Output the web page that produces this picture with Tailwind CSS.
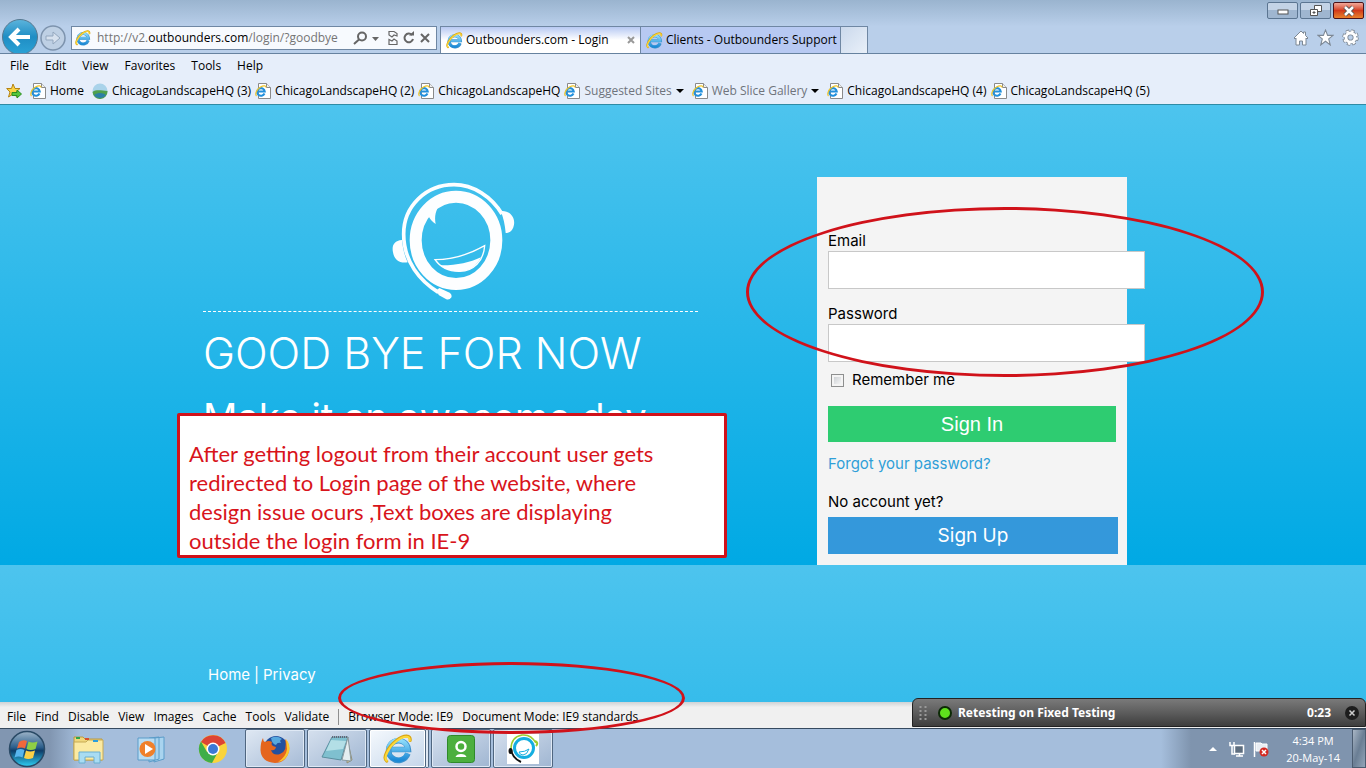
<!DOCTYPE html>
<html lang="en">
<head>
<meta charset="utf-8">
<title>Outbounders.com - Login</title>
<script src="https://cdn.jsdelivr.net/npm/@tailwindcss/browser@4"></script>
</head>
<body class="flex min-h-screen flex-col overflow-x-hidden font-['Open_Sans',sans-serif] text-xs text-black">

<svg class="absolute size-0" aria-hidden="true">
  <defs>
    <linearGradient id="eblue" x1="0" y1="0" x2="0" y2="1"><stop offset="0" stop-color="#8fdcfa"/><stop offset="1" stop-color="#1c8ad6"/></linearGradient>
    <linearGradient id="orb" x1="0" y1="0" x2="0" y2="1"><stop offset="0" stop-color="#9db4c8"/><stop offset=".45" stop-color="#2c5f8c"/><stop offset=".55" stop-color="#0d3c68"/><stop offset="1" stop-color="#2fd0f5"/></linearGradient>
    <linearGradient id="back" x1="0" y1="0" x2="0" y2="1"><stop offset="0" stop-color="#5cb4dc"/><stop offset=".5" stop-color="#1f8dc4"/><stop offset="1" stop-color="#2ba3d6"/></linearGradient>
  </defs>
  <symbol id="ie" viewBox="0 0 32 32">
    <path d="M26.500 21A10.500 10.500 0 1 1 27 16.500H9" fill="none" stroke="#3f93cc" stroke-width="6"/>
    <path d="M26 20.500A10.500 10.500 0 1 1 26.500 16.500H9" fill="none" stroke="url(#eblue)" stroke-width="4.600"/>
    <path d="M4 29C-1 26 5 14 14 7S30 1 29 7" fill="none" stroke="#d9a514" stroke-width="3.200" stroke-linecap="round"/>
    <path d="M4 28.500C0 26 6 14 14.500 7.500S29 2 28.500 7" fill="none" stroke="#fbd83a" stroke-width="2.200" stroke-linecap="round"/>
  </symbol>
  <symbol id="iepage" viewBox="0 0 16 16">
    <path d="M3.500.5h8l4 4v11h-12z" fill="#fff" stroke="#8a8a8a"/><path d="M11.500.5v4h4" fill="#eee" stroke="#8a8a8a"/>
    <path d="M9.500 10.500A3.800 3.800 0 1 1 9.800 8.500H3.500" fill="none" stroke="#2390dc" stroke-width="2"/>
    <path d="M1.500 13C-.5 11 2 6 5.500 4S11 3 11 4.500" fill="none" stroke="#f0c528" stroke-width="1.200"/>
  </symbol>
</svg>

<header>
  <div class="flex h-[54px] border-b border-[#66829f] bg-linear-to-b from-[#9ab4cf] to-[#b9cfea] to-50%">
    <div class="flex w-[66px] shrink-0 items-end gap-0.5 pl-0.5">
      <button aria-label="Back"><svg class="block h-[34px] w-9" viewBox="0 0 36 34"><circle cx="18" cy="18" r="17.500" fill="url(#back)" stroke="#58788f"/><path d="M9 18h19M17 10l-8 8 8 8" fill="none" stroke="#fff" stroke-width="4"/></svg></button>
      <button aria-label="Forward" class="mb-0.5"><svg class="block size-[26px]" viewBox="0 0 26 26"><circle cx="13" cy="13" r="12" fill="#bed0e4" stroke="#7d93ad" stroke-width="1.500"/><path d="M6 11h7V7l7 6-7 6v-4H6z" fill="#d6e1ee" stroke="#93a7be"/></svg></button>
    </div>
    <div class="ml-[5px] mt-[26px] flex h-6 w-[366px] items-center border border-[#6f87a3] bg-[#f7fafe] pl-[3px]">
      <svg class="size-4 shrink-0"><use href="#ie"/></svg>
      <div class="ml-1.5 flex-1 text-xs text-[#757575]">http://v2.<span class="text-black">outbounders.com</span>/login/?goodbye</div>
      <svg class="h-4 w-[84px] shrink-0" viewBox="0 0 84 16" fill="none" stroke="#666" stroke-width="2"><circle cx="10" cy="6.500" r="4"/><path d="M7 9.500 2 14"/><path d="M20 7h7l-3.500 4z" fill="#666" stroke="none"/><path d="M37 5V1.500h5l3 2V6l-3-1-2 2zM37 14.500v-5l3 1.500 2-2 3 2v3.500z" stroke-width="1.200"/><path d="M60 5a4.300 4.300 0 1 0 1 4"/><path d="M57 5.500h5V1z" fill="#666" stroke="none"/><path d="m69 4 8 8m0-8-8 8"/></svg>
    </div>
    <nav class="ml-[3px] mt-[26px] flex border border-b-0 border-[#6f87a3]">
      <div class="flex w-[200px] items-center border-r border-[#6f87a3] bg-linear-to-b from-[#b7c9f2] to-white to-50% pl-[5px] pr-[5px]">
        <svg class="size-[17px]"><use href="#ie"/></svg><a href="#" class="ml-[3px] flex-1">Outbounders.com - Login</a>
        <button aria-label="Close tab"><svg class="block size-2" viewBox="0 0 8 8"><path d="m1 1 6 6m0-6-6 6" stroke="#999" stroke-width="2"/></svg></button>
      </div>
      <div class="flex w-[200px] items-center border-r border-[#6f87a3] bg-[#b7c9f2] pl-[5px]">
        <svg class="size-[17px]"><use href="#ie"/></svg><a href="#" class="ml-[3px] whitespace-nowrap">Clients - Outbounders Support</a>
      </div>
      <button aria-label="New tab" class="w-[26px] bg-linear-to-br from-[#cbd9ec] to-[#e9f0f9]"></button>
    </nav>
    <div class="ml-auto flex flex-col items-end pr-0.5 pt-0.5">
      <div class="flex gap-0.5">
        <button aria-label="Minimize" class="flex h-[17px] w-[31px] items-center justify-center rounded-xs border border-[#5b7591] bg-linear-to-b from-[#c3d3e6] from-50% to-[#9fb6d0] to-50%"><svg class="h-2 w-3" viewBox="0 0 12 8"><rect x="1" y="3" width="10" height="4" fill="#fff" stroke="#555"/></svg></button>
        <button aria-label="Restore" class="flex h-[17px] w-[31px] items-center justify-center rounded-xs border border-[#5b7591] bg-linear-to-b from-[#c3d3e6] from-50% to-[#9fb6d0] to-50%"><svg class="h-3 w-3.5" viewBox="0 0 14 12" fill="#fff" stroke="#555"><path d="M5.500.5h7v6h-7z"/><path d="M1.500 4.500h7v6h-7z"/><path d="M4 7h2v1H4z" fill="#555"/></svg></button>
        <button aria-label="Close" class="flex h-[17px] w-[31px] items-center justify-center rounded-xs border border-[#4d1218] bg-linear-to-b from-[#f0a89a] via-[#d2391b] via-50% to-[#e8802c]"><svg class="h-3 w-3.5" viewBox="0 0 14 12"><path d="m3 2 8 8m0-8-8 8" stroke="#555" stroke-width="4.500"/><path d="m3 2 8 8m0-8-8 8" stroke="#fff" stroke-width="2.500"/></svg></button>
      </div>
      <div class="mt-2.5 flex gap-2 pr-[5px]">
        <button aria-label="Home"><svg class="block size-4" viewBox="0 0 16 16"><path d="M1 8 8 1l2.500 2.500V2h2v3.500L15 8l-1 1-1-1v7H9.500v-4h-3v4H3V8L2 9z" fill="#fff" stroke="#7d8894"/></svg></button>
        <button aria-label="Favorites"><svg class="block size-[17px]" viewBox="0 0 16 16"><path d="m8 1 2 5h5l-4 3.300L12.500 15 8 11.500 3.500 15 5 9.300 1 6h5z" fill="#fff" stroke="#7d8894"/></svg></button>
        <button aria-label="Tools"><svg class="block size-[17px]" viewBox="0 0 17 17"><circle cx="8.500" cy="8.500" r="6.500" fill="none" stroke="#7d8894" stroke-width="3.500" stroke-dasharray="3.100 2"/><circle cx="8.500" cy="8.500" r="4.500" fill="none" stroke="#7d8894" stroke-width="4.500"/><circle cx="8.500" cy="8.500" r="6.500" fill="none" stroke="#fff" stroke-width="1.800" stroke-dasharray="2.500 2.600"/><circle cx="8.500" cy="8.500" r="4.500" fill="none" stroke="#fff" stroke-width="2.800"/></svg></button>
      </div>
    </div>
  </div>
  <nav class="flex h-[23px] items-center gap-4 bg-[#e6eefa] pl-2.5">
    <a href="#">File</a><a href="#">Edit</a><a href="#">View</a><a href="#">Favorites</a><a href="#">Tools</a><a href="#">Help</a>
  </nav>
  <nav class="flex h-7 items-center gap-1 border-b border-[#2f8ba5] bg-[#e6eefa] pl-1.5">
    <button aria-label="Add to favorites" class="mr-1"><svg class="block size-4" viewBox="0 0 16 16"><path d="m7 1 2 4.500h5l-4 3.500 1.500 5L7 11l-4.500 3L4 9 .7 5.500H5.500z" fill="#fbd445" stroke="#b58314"/><path d="M6 9.500h5V7l4.500 4-4.500 4v-2.500H6z" fill="#57c63d" stroke="#2b8f20"/></svg></button>
    <a href="#" class="mr-1 flex items-center gap-1"><svg class="size-4"><use href="#iepage"/></svg>Home</a>
    <a href="#" class="flex items-center gap-1"><svg class="size-4" viewBox="0 0 16 16"><circle cx="8" cy="8" r="7.500" fill="#a9d3ea"/><path d="M.5 9c4-3 10-1 15-1a7.500 7.500 0 0 1-15 1z" fill="#4fa04c"/><path d="M2 12c5-3 9-2 12 0a7.500 7.500 0 0 1-12 0z" fill="#2c7fa5"/></svg>ChicagoLandscapeHQ (3)</a>
    <a href="#" class="flex items-center gap-1"><svg class="size-4"><use href="#iepage"/></svg>ChicagoLandscapeHQ (2)</a>
    <a href="#" class="flex items-center gap-1"><svg class="size-4"><use href="#iepage"/></svg>ChicagoLandscapeHQ</a>
    <a href="#" class="flex items-center gap-1 text-[#6f747c]"><svg class="size-4"><use href="#iepage"/></svg>Suggested Sites<svg class="mr-1 h-2 w-2" viewBox="0 0 8 8"><path d="M0 2h8L4 6z"/></svg></a>
    <a href="#" class="flex items-center gap-1 text-[#6f747c]"><svg class="size-4"><use href="#iepage"/></svg>Web Slice Gallery<svg class="mr-1 h-2 w-2" viewBox="0 0 8 8"><path d="M0 2h8L4 6z"/></svg></a>
    <a href="#" class="flex items-center gap-1"><svg class="size-4"><use href="#iepage"/></svg>ChicagoLandscapeHQ (4)</a>
    <a href="#" class="flex items-center gap-1"><svg class="size-4"><use href="#iepage"/></svg>ChicagoLandscapeHQ (5)</a>
  </nav>
</header>

<main class="flex flex-1 flex-col bg-linear-to-b/srgb from-[#4dc4ee] to-[#00a9e4] bg-[length:100%_460px] font-['Inter',sans-serif] text-[15px] leading-5">
  <div class="flex justify-center gap-[119px] pr-9 pt-[72px]">
    <section class="relative w-[495px] text-white">
      <div class="flex justify-center border-b border-dashed border-white pb-[11px] pl-1.5">
        <svg class="h-[123px] w-32" viewBox="30 21 384 369" fill="none" stroke="#fdfeff">
          <path d="M366 132C335 80 280 44 222 44 138 44 71 108 71 192c0 84 50 142 104 175" stroke-width="11"/>
          <ellipse cx="228" cy="211" rx="121" ry="131" stroke-width="36"/>
          <path d="M120 160l25-23c4 9 12 18 22 25-4-22-1-40 15-62l-35 10z" fill="#fdfeff" stroke="none"/>
          <path d="M362 123c24-3 44 16 40 41-2 15-12 25-25 25-2-25-7-46-15-66zM66 210c-25 2-31 18-27 37 4 22 18 34 44 30-10-22-15-44-17-67z" fill="#fdfeff" stroke="none"/>
          <path d="m170 361 8-7 31 14q8 6 5 14-5 9-15 6l-23-13z" fill="#fdfeff" stroke="none"/>
          <path d="M165 269c55 0 105-17 149-42-3 47-34 76-74 77-34 1-59-12-75-35z" stroke-width="4"/>
          <path d="M180 286c48 1 88-8 123-24-14 27-35 42-64 42-25 0-43-6-59-18z" fill="#fdfeff" stroke="none"/>
        </svg>
      </div>
      <h1 class="mt-[17px] text-[43px] font-light leading-12 whitespace-nowrap">GOOD BYE FOR NOW</h1>
      <p class="mt-4 text-[38px] leading-12 whitespace-nowrap">Make it an awesome day</p>
      <div class="absolute top-[236px] -left-[26px] w-[550px] rounded-xs border-3 border-[#d0121a] bg-white px-[9px] pt-[23px] font-['Lato',sans-serif] text-[22px] leading-[29px] whitespace-nowrap text-[#d8141b]">
        After getting logout from their account user gets<br>redirected to Login page of the website, where<br>design issue ocurs ,Text boxes are displaying<br>outside the login form in IE-9
      </div>
    </section>
    <form class="relative flex w-[310px] flex-col bg-[#f4f4f4] px-[11px] pt-[54px] pb-[11px]">
      <label for="email">Email</label>
      <input id="email" type="email" class="h-[38px] w-[317px] border border-[#c8c8c8] bg-white px-2">
      <label for="password" class="mt-[15px]">Password</label>
      <input id="password" type="password" class="h-[38px] w-[317px] border border-[#c8c8c8] bg-white px-2">
      <label class="flex h-9 items-center gap-2 pl-[3px]"><input type="checkbox" class="size-[13px] appearance-none border border-[#8e8f8f] bg-linear-to-br from-[#c4c8cc] to-white shadow-[inset_0_0_0_2px_#f4f4f4]">Remember me</label>
      <button type="button" class="mt-2 h-9 w-72 bg-[#2ecc71] font-['Liberation_Sans',sans-serif] text-xl text-white">Sign In</button>
      <a href="#" class="flex h-11 items-center text-[#2f9fd8]">Forgot your password?</a>
      <p class="mt-1.5">No account yet?</p>
      <button type="button" class="mt-[5px] h-[37px] w-[290px] bg-[#3498db] text-[19px] text-white">Sign Up</button>
      <div class="pointer-events-none absolute top-[30px] -left-[71px] h-[170px] w-[518px] rounded-[50%] border-3 border-[#d0121a]"></div>
    </form>
  </div>
  <footer class="flex gap-1 px-52 pt-[100px] pb-[17px] text-white"><a href="#">Home</a><span>|</span><a href="#">Privacy</a></footer>
</main>

<div class="relative z-10 flex h-[26px] items-center gap-[9px] bg-linear-to-b from-[#cfd3d5] to-[#f0f0f0] to-20% pt-1 pl-[7px]">
  <a href="#">File</a><a href="#">Find</a><a href="#">Disable</a><a href="#">View</a><a href="#">Images</a><a href="#">Cache</a><a href="#">Tools</a><a href="#">Validate</a>
  <span class="h-4 w-px bg-[#8f8f8f]"></span>
  <a href="#">Browser Mode: IE9</a><a href="#">Document Mode: IE9 standards</a>
  <div class="pointer-events-none absolute -top-10 left-[338px] h-[72px] w-[347px] rounded-[50%] border-3 border-[#d0121a]"></div>
  <div class="absolute -top-1 right-0 flex h-[29px] w-[454px] items-center rounded-t-md border border-[#222] bg-linear-to-b from-[#7a7a7a] via-[#5d5d5d] to-[#3e3e3e] px-1.5 font-['Noto_Sans',sans-serif] font-bold text-white">
    <svg class="h-4 w-2" viewBox="0 0 8 16"><path d="M1.500 1v15M6.500 1v15" stroke="#999" stroke-width="2" stroke-dasharray="2 2"/></svg>
    <svg class="ml-[11px] size-3.5" viewBox="0 0 14 14"><circle cx="7" cy="7" r="6" fill="#5fe01d" stroke="#0c2a05" stroke-width="2"/></svg>
    <span class="ml-1.5 flex-1">Retesting on Fixed Testing</span>
    <span>0:23</span>
    <button aria-label="Close recorder" class="ml-3.5"><svg class="block size-3.5" viewBox="0 0 14 14"><circle cx="7" cy="7" r="7" fill="#1d1d1d"/><path d="m4.500 4.500 5 5m0-5-5 5" stroke="#ccc" stroke-width="1.500"/></svg></button>
  </div>
</div>

<div class="flex h-10 border-t border-[#35495f] bg-[#a5bedc] bg-[linear-gradient(90deg,#8196b1_0,#8196b1_50px,#a5bedc_80px,#a5bedc_calc(100%-205px),#7f94ae_calc(100%-175px),#7f94ae_100%)]">
  <button aria-label="Start" class="ml-2 w-[50px]"><svg class="size-[38px]" viewBox="0 0 38 38"><circle cx="19" cy="19" r="17.500" fill="url(#orb)" stroke="#2a4a66" stroke-width="1.500"/><path d="M11 12q4-3 8-1l-2 7.500q-4-2-8 0z" fill="#f0683a"/><path d="M20.500 11.500q4 2 9 0l-2 7.500q-5 2-9 0z" fill="#8fce45"/><path d="M8.500 20q4-2 8 0l-2 7.500q-4-2-8 0z" fill="#58b5ee"/><path d="M18 20.500q4 2 9 0l-2 7.500q-5 2-9 0z" fill="#fcd047"/></svg></button>
  <button aria-label="Explorer" class="flex w-[62px] items-center justify-center"><svg class="h-8 w-9" viewBox="0 0 36 32"><path d="M3 4h9l2 2h17v21H3z" fill="#f0d77c" stroke="#b99a45"/><path d="M3 9h12l2-2h15v20H3z" fill="#fbeaa2" stroke="#c7aa55"/><path d="M5 5h4" stroke="#2fa74a" stroke-width="2"/><path d="M14 6h4" stroke="#d7502d" stroke-width="2"/><path d="M22 8h5" stroke="#2b9edb" stroke-width="2"/><path d="M8 30V19h21v11h-6v-6h-9v6z" fill="#a9dcf2" stroke="#6aaed0"/></svg></button>
  <button aria-label="Media Player" class="flex w-[62px] items-center justify-center"><svg class="size-8" viewBox="0 0 32 32"><path d="m19 5 10-1v22l-10 3zM14 5l10-1v22l-10 3z" fill="#a9d4ef" stroke="#5b9cc9"/><path d="M3 5h17v22H3z" fill="#b9dcf2" stroke="#5b9cc9"/><circle cx="12.500" cy="16" r="8" fill="#f0802a"/><path d="m10 11 8 5-8 5z" fill="#fff"/></svg></button>
  <button aria-label="Chrome" class="flex w-[62px] items-center justify-center"><svg class="size-[30px]" viewBox="0 0 30 30"><circle cx="15" cy="15" r="14" fill="#f9d43c"/><path d="M15 15 3 8a14 14 0 0 1 24.500 1z" fill="#dd4434"/><path d="M15 15 9 18 3 7.500A14 14 0 0 0 14 29l6-11z" fill="#3fae49"/><circle cx="15" cy="15" r="6.500" fill="#fff"/><circle cx="15" cy="15" r="5" fill="#3b79d6"/></svg></button>
  <button aria-label="Firefox" class="mx-px flex w-[60px] items-center justify-center rounded-xs border border-[#4f6680] bg-linear-to-br from-[#dfe8f3] to-[#a6bbd6] shadow-[inset_0_0_0_1px_#dfe9f5]"><svg class="size-8" viewBox="0 0 32 32"><circle cx="17" cy="15" r="12" fill="#23509e"/><path d="M12 5q6-3 11 1-3 1-1 4-4-1-5 2-4-1-5-7z" fill="#56a8de"/><path d="M4 5q0 3 2 4 4-2 7 0-2 4 4 5-1 4-5 3 2 6 9 4 8-3 5-15 5 5 4 12-3 12-14 12Q2 29 1.500 17 1.500 9 4 5z" fill="#e5651d"/><path d="M27 6q5 6 3 13-3 9-11 10 8-5 9-13z" fill="#fbc72e"/></svg></button>
  <button aria-label="Notepad" class="mx-px flex w-[60px] items-center justify-center rounded-xs border border-[#4f6680] bg-linear-to-br from-[#d5e0ee] to-[#a0b6d2] shadow-[inset_0_0_0_1px_#dfe9f5]"><svg class="size-8" viewBox="0 0 32 32"><path d="m26 5 5 22-5 3z" fill="#d9c79b" stroke="#8f8f7a"/><path d="M11 4h16l-7 23-19-3z" fill="#7fc0cf" stroke="#5a8f9f"/><path d="m10 7 15 1-3 8-17 2z" fill="#b3dfe6"/><path d="m21 27 6-23 3 24z" fill="#e5eef0" stroke="#8a9a9f"/><path d="M11 4h16" stroke="#667" stroke-width="2" stroke-dasharray="1 1"/></svg></button>
  <button aria-label="Internet Explorer" class="ml-px flex w-[57px] items-center justify-center rounded-xs border border-[#4f6680] bg-linear-to-br from-[#f5f9fd] to-[#c5d6ea] shadow-[inset_0_0_0_1px_#fff]"><svg class="size-[30px]"><use href="#ie"/></svg></button>
  <span class="mr-px w-[3px] rounded-r-xs border border-l-0 border-[#4f6680] bg-[#dfe8f3]"></span>
  <button aria-label="oDesk" class="mx-px flex w-[60px] items-center justify-center rounded-xs border border-[#4f6680] bg-linear-to-br from-[#d5e0ee] to-[#a0b6d2] shadow-[inset_0_0_0_1px_#dfe9f5]"><svg class="size-7" viewBox="0 0 28 28"><rect x=".5" y=".5" width="27" height="27" rx="3" fill="#4caf3e" stroke="#2f8a2a"/><circle cx="14" cy="11.500" r="4.500" fill="none" stroke="#fff" stroke-width="2.500"/><path d="M8.500 22q1-3 5.500-3t5.500 3z" fill="#fff"/></svg></button>
  <button aria-label="Outbounders" class="mx-px flex w-[60px] items-center justify-center rounded-xs border border-[#4f6680] bg-linear-to-br from-[#d5e0ee] to-[#a0b6d2] shadow-[inset_0_0_0_1px_#dfe9f5]"><svg class="h-[30px] w-8" viewBox="0 0 32 30" fill="none"><path d="M0 0h32v30H0z" fill="#fff"/><circle cx="17" cy="14" r="9.500" stroke="#14aee0" stroke-width="3"/><path d="M4 15Q4 3 15 1q9-1 14 8" stroke="#9ccc2f" stroke-width="1.500"/><path d="M28 7q4 2 1 5" stroke="#9ccc2f" stroke-width="2"/><path d="M4 15q1 9 10 13" stroke="#111" stroke-width="2"/><ellipse cx="3.500" cy="17" rx="2" ry="3" fill="#111"/><path d="M12 18q6 0 10-3-2 6-6 6-3 0-4-3z" stroke="#14aee0"/></svg></button>
  <div class="ml-auto flex items-center text-white">
    <svg class="h-2 w-2" viewBox="0 0 8 8"><path d="M0 6h8L4 2z" fill="#fff"/></svg>
    <svg class="ml-3 size-4" viewBox="0 0 16 16"><path d="M5.500 4.500h9v8h-9z" fill="#5e6e7f" stroke="#fff" stroke-width="1.500"/><path d="M7 15h7M10.500 13v2" stroke="#fff" stroke-width="1.500"/><path d="M1 1v3.500h4V1M3 4v9h3" fill="none" stroke="#fff" stroke-width="1.500"/></svg>
    <svg class="ml-2 size-4" viewBox="0 0 16 16"><path d="M1.500 1v15" stroke="#fff" stroke-width="1.500"/><path d="M3 2h5l1 1h5v7H3z" fill="#e8edf3" stroke="#fff"/><circle cx="11" cy="11" r="4.500" fill="#d42a22"/><path d="m9 9 4 4m0-4-4 4" stroke="#fff" stroke-width="1.500"/></svg>
    <div class="ml-[17px] mr-3 text-center text-[11px] leading-[17px]"><div>4:34 PM</div><div>20-May-14</div></div>
    <button aria-label="Show desktop" class="h-full w-3.5 border border-[#4b5c70] bg-linear-to-br from-[#a9b6c5] via-[#6a7e94] to-[#93a5b8]"></button>
  </div>
</div>
</body>
</html>
